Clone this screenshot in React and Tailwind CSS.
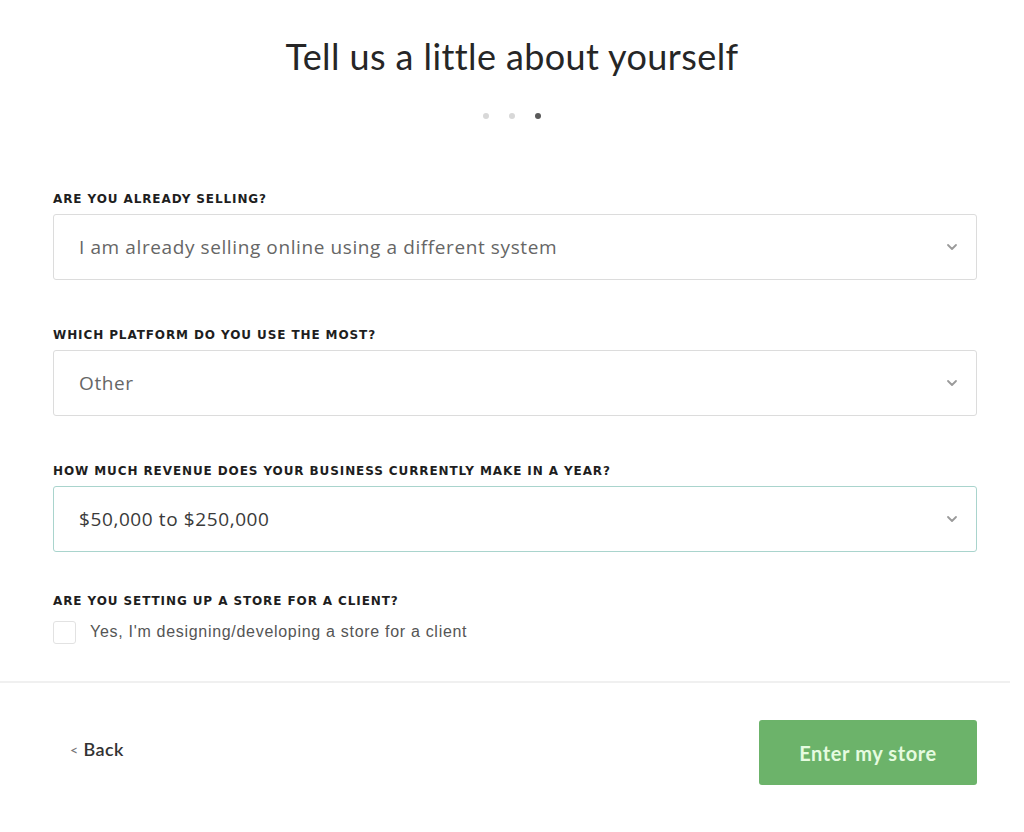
import React from "react";

function Chevron() {
  return (
    <svg width="14" height="14" viewBox="0 0 14 14" fill="none" className="shrink-0">
      <path d="M3 5l4 4 4-4" stroke="#9a9a9a" strokeWidth="1.8" strokeLinecap="round" strokeLinejoin="round" />
    </svg>
  );
}

function Select({ value, active, dark }) {
  return (
    <div
      className={`flex h-[66px] items-center justify-between rounded-[3px] border bg-white pl-[25px] pr-[17px] ${
        active ? "border-[#a9d4cd] border-[1.5px]" : "border-[#dcdcdc]"
      }`}
    >
      <span
        className={`text-[19px] tracking-[0.6px] ${dark ? "text-[#3a3a3a]" : "text-[#666]"}`}
        style={{ fontFamily: "'Open Sans', sans-serif" }}
      >
        {value}
      </span>
      <Chevron />
    </div>
  );
}

function Label({ children }) {
  return (
    <div
      className="mb-[7px] text-[12px] leading-[16px] font-extrabold uppercase tracking-[0.9px] text-[#1e1e1e]"
      style={{ fontFamily: "'DejaVu Sans', sans-serif" }}
    >
      {children}
    </div>
  );
}

export default function App() {
  return (
    <div className="min-h-[832px] w-[1024px] bg-white" style={{ fontFamily: "Lato, 'Open Sans', sans-serif" }}>
      <div className="flex flex-col items-center pt-[34px]">
        <h1 className="text-[36px] leading-[44px] tracking-[0.4px] text-[#262626]">Tell us a little about yourself</h1>
        <div className="mt-[35px] flex gap-[20px]">
          <span className="h-[6px] w-[6px] rounded-full bg-[#d8d8d8]" />
          <span className="h-[6px] w-[6px] rounded-full bg-[#d8d8d8]" />
          <span className="h-[6px] w-[6px] rounded-full bg-[#5a5a5a]" />
        </div>
      </div>
      <div className="ml-[53px] mr-[47px] mt-[72px] flex flex-col">
        <Label>Are you already selling?</Label>
        <Select value="I am already selling online using a different system" />
        <div className="h-[47px]" />
        <Label>Which platform do you use the most?</Label>
        <Select value="Other" />
        <div className="h-[47px]" />
        <Label>How much revenue does your business currently make in a year?</Label>
        <Select value="$50,000 to $250,000" active dark />
        <div className="h-[41px]" />
        <Label>Are you setting up a store for a client?</Label>
        <div className="mt-[4px] flex items-center gap-[14px]">
          <span className="h-[23px] w-[23px] rounded-[3px] border border-[#e2e2e2] bg-white" />
          <span
            className="text-[16px] tracking-[0.7px] text-[#555]"
            style={{ fontFamily: "'Liberation Sans', sans-serif" }}
          >
            Yes, I'm designing/developing a store for a client
          </span>
        </div>
      </div>
      <div className="mr-[14px] mt-[37px] h-[2px] bg-[#f0f0f0]" />
      <div className="ml-[70px] mr-[47px] mt-[37px] flex items-center justify-between">
        <button className="mb-[6px] flex items-center gap-[5px] text-[18px] font-semibold tracking-[0.4px] text-[#333]">
          <span className="text-[14px] text-[#777]">&lt;</span>Back
        </button>
        <button className="flex h-[65px] w-[218px] items-center justify-center rounded-[3px] bg-[#6cb36a] text-[20px] font-bold tracking-[0.6px] text-[#e6fbe0]">
          Enter my store
        </button>
      </div>
    </div>
  );
}
